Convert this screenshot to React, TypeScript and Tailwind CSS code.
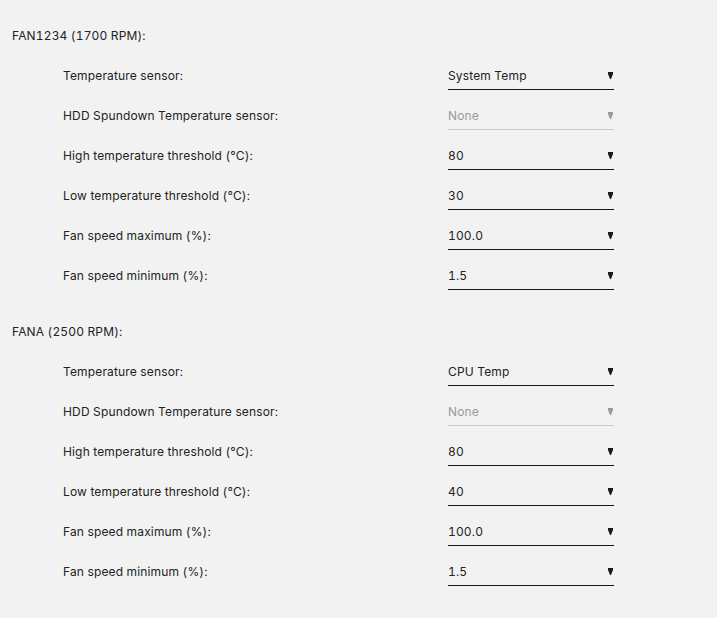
import React from 'react';

type Row = { label: string; value: string; disabled?: boolean };
type Fan = { name: string; rows: Row[] };

const fans: Fan[] = [
  {
    name: 'FAN1234 (1700 RPM):',
    rows: [
      { label: 'Temperature sensor:', value: 'System Temp' },
      { label: 'HDD Spundown Temperature sensor:', value: 'None', disabled: true },
      { label: 'High temperature threshold (°C):', value: '80' },
      { label: 'Low temperature threshold (°C):', value: '30' },
      { label: 'Fan speed maximum (%):', value: '100.0' },
      { label: 'Fan speed minimum (%):', value: '1.5' },
    ],
  },
  {
    name: 'FANA (2500 RPM):',
    rows: [
      { label: 'Temperature sensor:', value: 'CPU Temp' },
      { label: 'HDD Spundown Temperature sensor:', value: 'None', disabled: true },
      { label: 'High temperature threshold (°C):', value: '80' },
      { label: 'Low temperature threshold (°C):', value: '40' },
      { label: 'Fan speed maximum (%):', value: '100.0' },
      { label: 'Fan speed minimum (%):', value: '1.5' },
    ],
  },
];

const Caret = ({ disabled }: { disabled?: boolean }) => (
  <svg width="5" height="7" viewBox="0 0 5 7" className={disabled ? 'fill-[#9a9a9a]' : 'fill-[#1a1a1a]'}>
    <polygon points="0,0 5,0 5,2 3,7 2,7 0,2" />
  </svg>
);

const SelectBox = ({ value, disabled }: { value: string; disabled?: boolean }) => (
  <div
    className={`w-[166px] h-[28px] flex items-center justify-between pr-[1px] border-b ${
      disabled ? 'border-[#c8c8c8] text-[#9a9a9a]' : 'border-[#1a1a1a] text-[#222]'
    }`}
  >
    <span>{value}</span>
    <Caret disabled={disabled} />
  </div>
);

const App = () => {
  return (
    <div className="min-h-[618px] bg-[#f2f2f2] text-[12px] text-[#222] tracking-[0.15px] tabular-nums font-['Inter',sans-serif]">
      {fans.map((fan) => (
        <div key={fan.name} className="pt-4">
          <div className="h-10 flex items-center pl-3">{fan.name}</div>
          {fan.rows.map((row) => (
            <div key={row.label} className="h-10 flex items-center pl-[63px]">
              <div className="w-[385px]">{row.label}</div>
              <SelectBox value={row.value} disabled={row.disabled} />
            </div>
          ))}
        </div>
      ))}
    </div>
  );
};

export default App;
